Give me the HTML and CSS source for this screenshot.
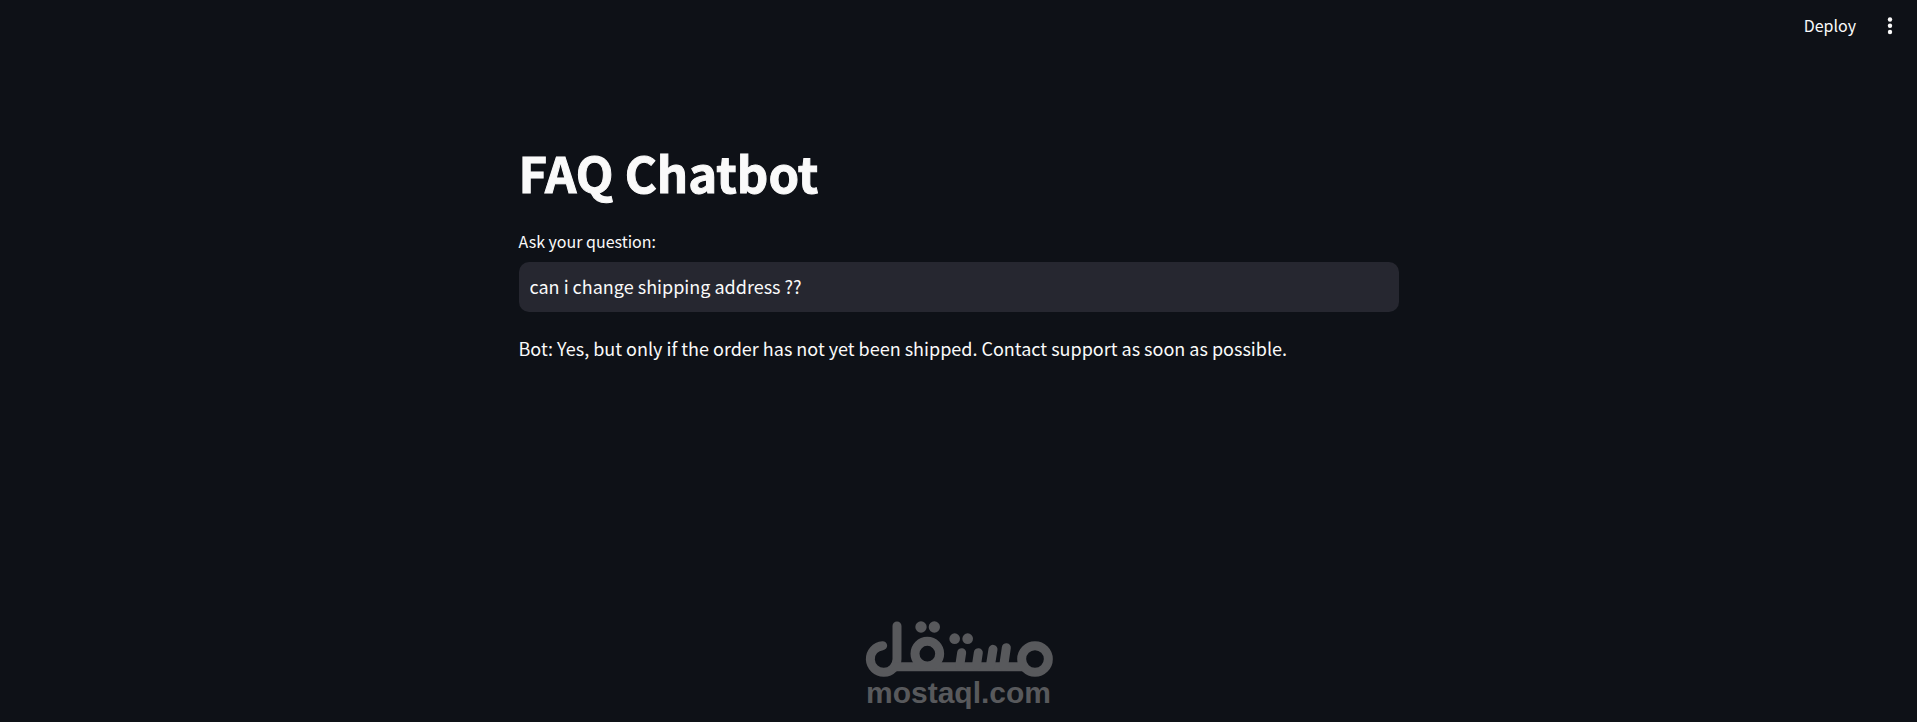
FILE: index.html
```
<!DOCTYPE html>
<html lang="en">
<head>
    <meta charset="UTF-8">
    <meta name="viewport" content="width=device-width, initial-scale=1.0">
    <title>FAQ Chatbot</title>
    <link rel="stylesheet" href="styles.css">
</head>
<body>
    <header class="toolbar">
        <button class="deploy" type="button">Deploy</button>
        <button class="menu" type="button" aria-label="Main menu">
            <svg viewBox="0 0 20 20" width="20" height="20" fill="currentColor">
                <circle cx="10" cy="4.5" r="2.2"/>
                <circle cx="10" cy="10.7" r="2.2"/>
                <circle cx="10" cy="17" r="2.2"/>
            </svg>
        </button>
    </header>

    <main class="chat">
        <h1>FAQ Chatbot</h1>
        <label for="question">Ask your question:</label>
        <input type="text" id="question" value="can i change shipping address ??" autocomplete="off" spellcheck="false">
        <p class="answer">Bot: Yes, but only if the order has not yet been shipped. Contact support as soon as possible.</p>
    </main>

    <footer class="brand">
        <!-- Logo mark -->
        <svg class="logo" viewBox="42 32 564 168" role="img" aria-label="مستقل">
            <g fill="none" stroke="currentColor" stroke-width="27">
                <path d="M95 106A40 40 0 1 0 138 146V47" stroke-linecap="round"/>
                <path d="M126 169H522"/>
                <circle cx="229" cy="130" r="37"/>
                <circle cx="552" cy="146" r="40"/>
                <path d="M332 127L326 167M382 127L376 167M426 117L418 167M466 112L458 167" stroke-linecap="round"/>
            </g>
            <g fill="currentColor">
                <circle cx="210" cy="50" r="17"/>
                <circle cx="250" cy="50" r="17"/>
                <circle cx="311" cy="85" r="16"/>
                <circle cx="350" cy="85" r="16"/>
            </g>
        </svg>
        <span class="domain">mostaql.com</span>
    </footer>
</body>
</html>
```
FILE: styles.css
```
* {
    box-sizing: border-box;
}
body {
    display: flex;
    flex-direction: column;
    min-height: 100vh;
    margin: 0;
    background-color: #0e1117;
    color: #fafafa;
    font-family: "Noto Sans CJK SC", "Noto Sans", sans-serif;
    font-size: 18px;
}
button {
    border: none;
    padding: 0;
    background: none;
    color: inherit;
    font: inherit;
    cursor: pointer;
}
.toolbar {
    display: flex;
    justify-content: flex-end;
    align-items: center;
    gap: 24px;
    padding: 14px 17px;
}
.deploy {
    font-size: 16px;
    line-height: 22px;
}
.menu {
    display: flex;
}
.chat {
    width: 100%;
    max-width: 880px;
    margin: 0 auto;
    padding-top: 89px;
}
.chat h1 {
    margin: 0 0 25px;
    font-size: 49px;
    font-weight: 700;
    line-height: 66px;
    -webkit-text-stroke: 1px currentColor;
}
.chat label {
    display: block;
    margin-bottom: 9px;
    font-size: 16px;
    line-height: 23px;
}
.chat input {
    display: block;
    width: 100%;
    height: 50px;
    padding: 0 11px 2px;
    border: none;
    border-radius: 10px;
    outline: none;
    background-color: #262730;
    color: inherit;
    font: inherit;
}
.answer {
    margin: 20px 0;
    line-height: 32px;
}
.brand {
    display: flex;
    flex-direction: column;
    align-items: center;
    margin-top: auto;
    padding-bottom: 14px;
    color: #58595c;
}
.logo {
    width: 188px;
    height: 56px;
}
.domain {
    font-family: "Liberation Sans", Arial, sans-serif;
    font-size: 30px;
    font-weight: 700;
    line-height: 31px;
}
```
